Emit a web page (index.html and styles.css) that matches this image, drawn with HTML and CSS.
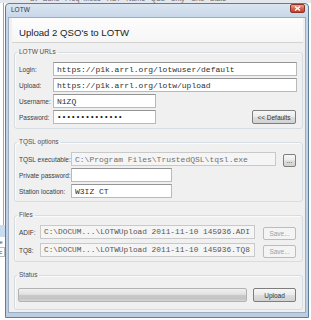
FILE: index.html
```html
<!DOCTYPE html>
<html lang="en">
<head>
  <meta charset="UTF-8" />
  <title>LOTW</title>
  <link rel="stylesheet" href="styles.css">
</head>
<body>
  <div class="top-strip"><span>Dt   Band   Freq  Mode   RST   Name   QSL   Cnty   Grid   State</span></div>
  <div class="desk">
    <div class="behind">
      <div class="behind-line"></div>
      <div class="behind-sel"></div>
      <div class="behind-text">he</div>
      <div class="behind-box">ec</div>
    </div>

    <div class="window">
      <div class="titlebar">
        <span class="title">LOTW</span>
        <span class="close">
          <svg width="7" height="5" viewBox="0 0 7 5"><path d="M1 0.5 L6 4.5 M6 0.5 L1 4.5" stroke="#fff" stroke-width="1.4"/></svg>
        </span>
      </div>

      <div class="client">
        <div class="header">Upload 2 QSO's to LOTW</div>

        <fieldset class="group urls">
          <legend>LOTW URLs</legend>
          <div class="row">
            <span class="label">Login:</span>
            <input class="field wide" value="https://p1k.arrl.org/lotwuser/default">
          </div>
          <div class="row">
            <span class="label">Upload:</span>
            <input class="field wide" value="https://p1k.arrl.org/lotw/upload">
          </div>
          <div class="row">
            <span class="label">Username:</span>
            <input class="field short" value="N1ZQ">
          </div>
          <div class="row">
            <span class="label">Password:</span>
            <input class="field short pass" type="password" value="abcdefghijklmn">
            <button class="btn defaults">&lt;&lt; Defaults</button>
          </div>
        </fieldset>

        <fieldset class="group tqsl">
          <legend>TQSL options</legend>
          <div class="row">
            <span class="label">TQSL executable:</span>
            <input class="field exe off" value="C:\Program Files\TrustedQSL\tqsl.exe" disabled>
            <button class="btn browse">...</button>
          </div>
          <div class="row">
            <span class="label">Private password:</span>
            <input class="field short" type="password" value="">
          </div>
          <div class="row">
            <span class="label">Station location:</span>
            <input class="field short" value="W3IZ CT">
          </div>
        </fieldset>

        <fieldset class="group files">
          <legend>Files</legend>
          <div class="row">
            <span class="label">ADIF:</span>
            <input class="field file off" value="C:\DOCUM...\LOTWUpload 2011-11-10 145936.ADI" disabled>
            <button class="btn save" disabled>Save...</button>
          </div>
          <div class="row">
            <span class="label">TQ8:</span>
            <input class="field file off" value="C:\DOCUM...\LOTWUpload 2011-11-10 145936.TQ8" disabled>
            <button class="btn save" disabled>Save...</button>
          </div>
        </fieldset>

        <fieldset class="group status">
          <legend>Status</legend>
          <div class="row">
            <div class="progress"></div>
            <button class="btn upload">Upload</button>
          </div>
        </fieldset>
      </div>
    </div>
  </div>
</body>
</html>
```

FILE: styles.css
```css
body {
  margin: 0;
  width: 311px;
  height: 320px;
  overflow: hidden;
  background-color: #fff;
  font-family: 'Liberation Sans', Arial, sans-serif;
}
.top-strip {
  height: 3px;
  background-color: #e4e7eb;
  overflow: hidden;
}
.top-strip span {
  display: block;
  margin-top: -5px;
  padding-left: 30px;
  font-size: 7px;
  line-height: 8px;
  color: #666;
  white-space: pre;
}
.desk {
  display: flex;
}
.behind {
  width: 5px;
  flex: none;
  overflow: hidden;
  font-size: 6px;
  color: #444;
}
.behind-line {
  width: 3px;
  height: 222px;
  border-right: 1px solid #a5a5a5;
}
.behind-sel {
  height: 12px;
  background-color: #c9dbef;
}
.behind-text {
  height: 10px;
  line-height: 10px;
  margin-left: -4px;
}
.behind-box {
  height: 8px;
  line-height: 8px;
  margin-left: -5px;
  border: 1px solid #bbb;
}
.window {
  width: 304px;
  height: 315px;
  box-sizing: border-box;
  border: 1px solid #5f7c9b;
  border-radius: 4px 4px 0 0;
  background: linear-gradient(#dbe5f1, #c6d6e8 14px, #bccde2);
  display: flex;
  flex-direction: column;
}
.titlebar {
  height: 13px;
  flex: none;
  display: flex;
  align-items: flex-start;
  padding: 0 3px 0 5px;
}
.title {
  flex: 1;
  font-size: 6.5px;
  line-height: 11px;
  color: #24364f;
}
.close {
  width: 15px;
  height: 9px;
  box-sizing: border-box;
  border: 1px solid #8a3526;
  border-radius: 2px;
  background: linear-gradient(#eaa593, #d66650 50%, #c2412b);
  display: flex;
  align-items: center;
  justify-content: center;
}
.client {
  flex: 1;
  margin: 0 2px 4px;
  border: 1px solid #9cadc2;
  background-color: #f0f0f0;
  display: flex;
  flex-direction: column;
}
.header {
  height: 20px;
  margin: 0 2px 0 3px;
  padding: 4px 0 0 7px;
  background: linear-gradient(#fdfdfd, #f6f6f6);
  border-bottom: 1px solid #d3d3d3;
  display: flex;
  align-items: center;
  font-size: 9.6px;
  color: #222;
}
.group {
  margin: 8px 2px 0 5px;
  padding: 5px 5px 4px 4px;
  min-width: 0;
  border: 1px solid #d5dde3;
  border-radius: 3px;
  box-shadow: inset 1px 1px 0 #fbfbfb;
}
.urls {
  margin-top: 4px;
}
.tqsl {
  padding-bottom: 3px;
}
.status {
  padding-top: 8px;
  padding-bottom: 7px;
}
legend {
  margin-left: -2px;
  padding: 0 2px;
  font-size: 6.5px;
  line-height: 10px;
  color: #4f4f4f;
}
.row {
  display: flex;
  align-items: center;
  height: 14px;
}
.row + .row {
  margin-top: 2px;
}
.files .row + .row {
  margin-top: 4px;
}
.label {
  flex: none;
  font-size: 6.5px;
  color: #3d3d3d;
  white-space: nowrap;
}
.urls .label {
  width: 34px;
}
.tqsl .label {
  width: 52px;
}
.files .label {
  width: 21px;
}
.field {
  height: 14px;
  box-sizing: border-box;
  margin: 0;
  padding: 0 3px;
  border: 1px solid #b9b9b9;
  border-top-color: #949494;
  border-radius: 0;
  background-color: #fff;
  font-family: 'Liberation Mono', 'Courier New', monospace;
  font-size: 8px;
  color: #2f2f2f;
  outline: none;
}
.field.pass {
  font-size: 7.5px;
  letter-spacing: 0.2px;
  color: #111;
}
.field.wide {
  flex: 1;
  min-width: 0;
}
.urls .field.short {
  width: 103px;
}
.tqsl .field.short {
  width: 101px;
}
.field.exe {
  width: 205px;
}
.field.file {
  width: 215px;
  padding: 0 1px 0 3px;
  font-size: 7.8px;
}
.field.off {
  background-color: #f5f5f5;
  border-color: #c9c9c9;
  color: #707070;
}
.files .field.off {
  color: #555;
}
.btn {
  height: 14px;
  box-sizing: border-box;
  margin: 0;
  padding: 0;
  border: 1px solid #7e7e7e;
  border-radius: 2px;
  background: linear-gradient(#f7f7f7, #ebebeb 48%, #dddddd 52%, #d2d2d2);
  font-family: 'Liberation Sans', Arial, sans-serif;
  font-size: 6.5px;
  color: #333;
}
.btn.defaults {
  width: 44px;
  margin-left: auto;
  margin-right: 1px;
}
.btn.browse {
  width: 13px;
  height: 13px;
  margin: 2px 0 0 7px;
}
.btn.save {
  width: 33px;
  height: 13px;
  margin: 2px 0 0 8px;
  border-color: #bcbcbc;
  background: #f4f4f4;
  color: #a0a0a0;
}
.btn.upload {
  width: 43px;
  margin-left: 6px;
}
.progress {
  width: 229px;
  height: 14px;
  box-sizing: border-box;
  margin-left: -1px;
  border: 1px solid #b3b3b3;
  border-radius: 2px;
  background: linear-gradient(#f0f0f0, #e1e1e1 45%, #cacaca 50%, #c4c4c4 80%, #d6d6d6);
}
```
